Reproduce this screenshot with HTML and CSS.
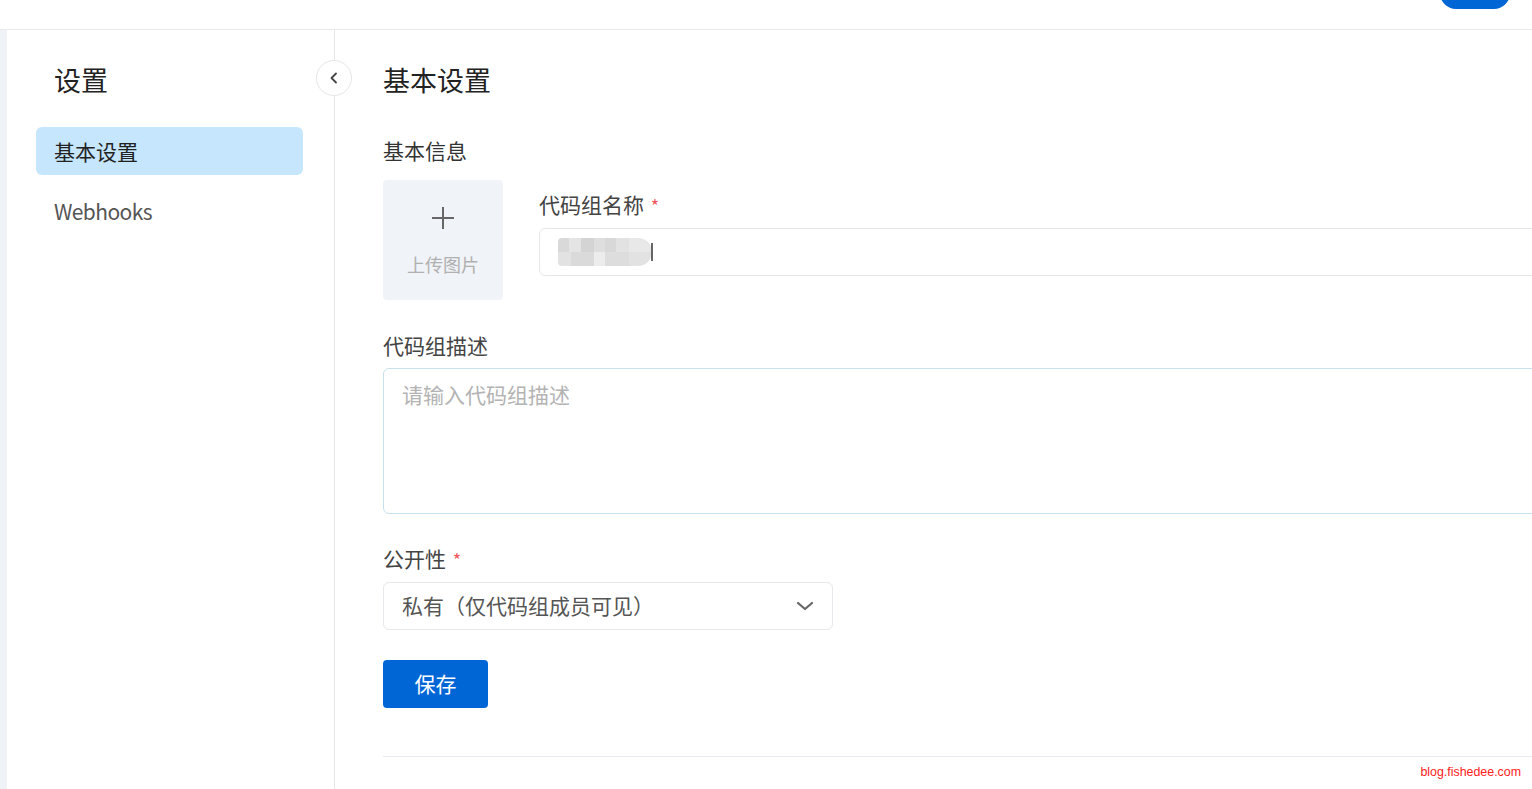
FILE: index.html
```html
<!DOCTYPE html>
<html lang="zh-CN">
<head>
<meta charset="utf-8">
<title>设置</title>
<link rel="stylesheet" href="styles.css">
</head>
<body>
<div class="app">
  <header class="topbar">
    <button class="top-btn" type="button" aria-label="操作"></button>
  </header>
  <div class="layout">
    <div class="strip"></div>
    <aside class="sidebar">
      <h2 class="side-title">设置</h2>
      <nav class="side-menu">
        <a class="side-item active">基本设置</a>
        <a class="side-item latin">Webhooks</a>
      </nav>
      <button class="collapse" type="button" aria-label="收起">
        <svg width="14" height="14" viewBox="0 0 14 14"><path d="M9 2.5 4.5 7 9 11.5" fill="none" stroke="#444" stroke-width="1.8" stroke-linecap="round" stroke-linejoin="round"/></svg>
      </button>
    </aside>
    <main class="main">
      <div class="form">
        <h1 class="page-title">基本设置</h1>
        <div class="section-title">基本信息</div>
        <div class="basic-row">
          <div class="upload">
            <svg class="plus" width="24" height="24" viewBox="0 0 24 24"><path d="M12 1v22M1 12h22" stroke="#666" stroke-width="2"/></svg>
            <span class="upload-text">上传图片</span>
          </div>
          <div class="name-col">
            <label class="label">代码组名称 <span class="req">*</span></label>
            <div class="input">
              <span class="blur"></span><span class="caret"></span>
            </div>
          </div>
        </div>
        <div class="field">
          <label class="label">代码组描述</label>
          <div class="textarea"><span class="placeholder">请输入代码组描述</span></div>
        </div>
        <div class="field field-select">
          <label class="label">公开性 <span class="req">*</span></label>
          <div class="select">
            <span class="select-value">私有（仅代码组成员可见）</span>
            <svg width="18" height="12" viewBox="0 0 18 12"><path d="M2 3l7 6 7-6" fill="none" stroke="#666" stroke-width="2.2" stroke-linecap="round" stroke-linejoin="round"/></svg>
          </div>
        </div>
        <button class="save" type="button">保存</button>
        <div class="divider"></div>
      </div>
    </main>
  </div>
  <div class="watermark">blog.fishedee.com</div>
</div>
</body>
</html>
```

FILE: styles.css
```css
* { box-sizing: border-box; }
html, body {
  margin: 0;
  padding: 0;
  width: 1532px;
  height: 789px;
  overflow: hidden;
  background: #fff;
  font-family: "Noto Sans CJK SC", "Noto Sans", sans-serif;
  color: #333;
}
.app {
  position: relative;
  height: 789px;
  display: flex;
  flex-direction: column;
}
.topbar {
  height: 30px;
  flex: 0 0 30px;
  border-bottom: 1px solid #e9e9e9;
  display: flex;
  justify-content: flex-end;
  align-items: flex-end;
  padding-right: 22px;
  padding-bottom: 21px;
}
.top-btn {
  width: 70px;
  height: 32px;
  border: none;
  border-radius: 16px;
  background: #0066d6;
  padding: 0;
  margin-bottom: -1px;
}
.layout {
  flex: 1;
  display: flex;
  min-height: 0;
}
.strip {
  width: 7px;
  flex: 0 0 7px;
  background: #eff3f7;
}
.sidebar {
  position: relative;
  width: 328px;
  flex: 0 0 328px;
  border-right: 1px solid #e6e6e6;
  padding: 30px 31px 0 29px;
}
.side-title {
  margin: 0 0 27px 18px;
  font-size: 27px;
  line-height: 40px;
  font-weight: 400;
  color: #222;
}
.side-menu {
  display: flex;
  flex-direction: column;
  gap: 12px;
}
.side-item {
  display: block;
  height: 48px;
  line-height: 48px;
  padding-left: 18px;
  border-radius: 6px;
  font-size: 21px;
  color: #555;
}
.side-item.latin {
  letter-spacing: -0.6px;
}
.side-item.active {
  background: #c5e6fc;
  color: #222;
}
.collapse {
  position: absolute;
  top: 30px;
  right: -18px;
  width: 36px;
  height: 36px;
  border-radius: 50%;
  border: 1px solid #e6e6e6;
  background: #fff;
  padding: 0;
  display: flex;
  align-items: center;
  justify-content: center;
}
.main {
  flex: 1;
  min-width: 0;
  overflow: hidden;
  padding: 30px 0 0 48px;
}
.form {
  width: 1260px;
}
.page-title {
  margin: 0 0 34px;
  font-size: 27px;
  line-height: 40px;
  font-weight: 400;
  color: #222;
}
.section-title {
  font-size: 21px;
  line-height: 33px;
  color: #333;
  margin-bottom: 13px;
}
.basic-row {
  display: flex;
  gap: 36px;
  margin-bottom: 29px;
}
.upload {
  width: 120px;
  height: 120px;
  flex: 0 0 120px;
  background: #f0f3f7;
  border-radius: 4px;
  display: flex;
  flex-direction: column;
  align-items: center;
  padding-top: 26px;
}
.upload-text {
  margin-top: 19px;
  font-size: 18px;
  line-height: 30px;
  color: #b0b0b0;
}
.name-col {
  flex: 1;
  padding-top: 8px;
}
.label {
  display: block;
  font-size: 21px;
  line-height: 33px;
  color: #444;
  margin-bottom: 6px;
}
.req {
  color: #f0575b;
  font-size: 18px;
  margin-left: 2px;
}
.input {
  height: 48px;
  border: 1px solid #e5e7ea;
  border-radius: 6px;
  display: flex;
  align-items: center;
  padding-left: 18px;
}
.blur {
  display: block;
  width: 94px;
  height: 28px;
  border-radius: 4px 14px 14px 4px;
  background:
    linear-gradient(90deg, #d9d9d9 0 12%, #e4e4e4 12% 24%, #d4d4d4 24% 38%, #dedede 38% 50%, #d8d8d8 50% 62%, #e2e2e2 62% 76%, #e8e8e8 76% 100%) top / 100% 50% no-repeat,
    linear-gradient(90deg, #e2e2e2 0 14%, #dadada 14% 38%, #ececec 38% 50%, #dddddd 50% 76%, #e2e2e2 76% 100%) bottom / 100% 50% no-repeat;
}
.caret {
  display: block;
  width: 2px;
  height: 18px;
  margin-left: -1px;
  background: #666;
}
.field {
  margin-bottom: 28px;
}
.field-select {
  margin-bottom: 30px;
}
.textarea {
  height: 146px;
  border: 1px solid #c8dfee;
  border-radius: 6px;
  padding: 9px 18px;
}
.placeholder {
  font-size: 21px;
  line-height: 33px;
  color: #b3b3b3;
}
.select {
  width: 450px;
  height: 48px;
  border: 1px solid #e5e7ea;
  border-radius: 6px;
  display: flex;
  align-items: center;
  justify-content: space-between;
  padding: 0 18px 0 18px;
}
.select-value {
  font-size: 21px;
  line-height: 30px;
  color: #555;
  margin-top: -2px;
}
.save {
  display: block;
  width: 105px;
  height: 48px;
  border: none;
  border-radius: 4px;
  background: #0066d6;
  color: #fff;
  font-family: "Noto Sans CJK SC", sans-serif;
  font-size: 21px;
  padding: 0 0 2px;
}
.divider {
  margin-top: 48px;
  height: 1px;
  background: #e6e9ed;
}
.watermark {
  position: absolute;
  right: 11px;
  bottom: 10px;
  font-family: "Liberation Sans", Arial, sans-serif;
  font-size: 12.4px;
  color: #ff2020;
}
```
